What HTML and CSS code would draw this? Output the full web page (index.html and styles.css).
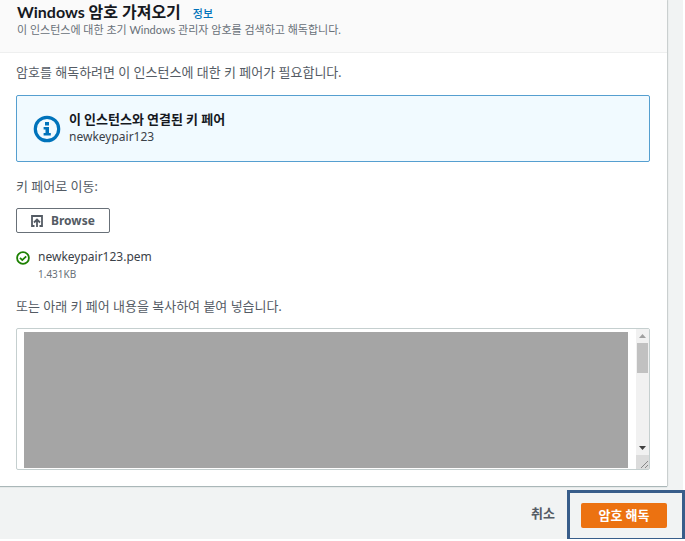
FILE: index.html
```html
<!DOCTYPE html>
<html lang="ko">
<head>
<meta charset="utf-8">
<meta name="viewport" content="width=device-width, initial-scale=1">
<title>Windows 암호 가져오기</title>
<link rel="stylesheet" href="styles.css">
</head>
<body>
<main class="page">
  <form class="form">
    <section class="panel">
      <header class="panel-header">
        <div class="title-row">
          <h1>Windows 암호 가져오기</h1>
          <a class="info-link" href="#info">정보</a>
        </div>
        <p class="description">이 인스턴스에 대한 초기 Windows 관리자 암호를 검색하고 해독합니다.</p>
      </header>
      <div class="panel-body">
        <p class="text">암호를 해독하려면 이 인스턴스에 대한 키 페어가 필요합니다.</p>
        <div class="alert">
          <svg class="alert-icon" viewBox="0 0 28 28" aria-hidden="true">
            <circle cx="14" cy="14" r="11.7" fill="none" stroke="#0073bb" stroke-width="3.2"/>
            <path d="M12 7h4v3.4h-4zM10.6 12H16v6h1.8v2.6h-7.2V18h1.900v-3.4h-1.900z" fill="#0073bb"/>
          </svg>
          <div class="alert-text">
            <strong>이 인스턴스와 연결된 키 페어</strong>
            <span class="latin">newkeypair123</span>
          </div>
        </div>
        <p class="text">키 페어로 이동:</p>
        <button class="browse latin" type="button">
          <svg viewBox="0 0 14 14" aria-hidden="true">
            <path d="M4.500 12H2V2h10v10H9.500M7 13V6M4 8.500l3-3 3 3" fill="none" stroke="#545b64" stroke-width="1.800"/>
          </svg>
          Browse
        </button>
        <div class="file">
          <svg viewBox="0 0 14 14" aria-hidden="true">
            <circle cx="7" cy="7" r="5.900" fill="none" stroke="#1d8102" stroke-width="1.800"/>
            <path d="M4 6.800l2.300 2.300L10.200 5.300" fill="none" stroke="#1d8102" stroke-width="1.800"/>
          </svg>
          <div class="file-text">
            <span class="file-name latin">newkeypair123.pem</span>
            <span class="file-size">1.431KB</span>
          </div>
        </div>
        <label class="text" for="key">또는 아래 키 페어 내용을 복사하여 붙여 넣습니다.</label>
        <div class="key-box">
          <textarea id="key"></textarea>
          <div class="mask"></div>
          <div class="scrollbar" aria-hidden="true">
            <svg class="arrow" viewBox="0 0 13 14"><path d="M3 9h7L6.500 5z" fill="#a0a0a0"/></svg>
            <div class="thumb"></div>
            <svg class="arrow down" viewBox="0 0 13 14"><path d="M3 5h7L6.500 9z" fill="#404040"/></svg>
            <svg class="grip" viewBox="0 0 13 14"><path d="M5 13l7-7M9 13l3-3" stroke="#888" fill="none"/></svg>
          </div>
        </div>
      </div>
    </section>
    <footer class="actions">
      <button class="cancel" type="button">취소</button>
      <div class="highlight"><button class="submit" type="submit">암호 해독</button></div>
    </footer>
  </form>
</main>
</body>
</html>
```

FILE: styles.css
```css
* {
  box-sizing: border-box;
}

body {
  margin: 0;
  background: #fff;
  color: #545b64;
  font: 13px/20px Lato, "Noto Sans CJK KR", sans-serif;
}

h1,
p {
  margin: 0;
}

svg {
  display: block;
  flex: none;
}

button {
  font: inherit;
  font-weight: 700;
  border-radius: 2px;
}

.latin {
  font-family: "Noto Sans", sans-serif;
  font-size: 12px;
}

.page {
  margin-right: 2px;
  background: #f1f3f3;
}

.panel {
  margin-right: 16px;
  background: #fff;
  box-shadow: 0 1px 1px #aab7b8, 1px 0 1px #d0d4d4;
}

.panel-header {
  padding: 2px 17px 14px;
  background: #fafafa;
  border-bottom: 1px solid #eeefef;
}

.title-row {
  display: flex;
  align-items: baseline;
  gap: 12px;
  height: 20px;
}

h1 {
  color: #16191f;
  font-size: 16px;
  line-height: 20px;
  font-weight: 700;
}

.info-link {
  color: #0073bb;
  font-size: 11px;
  font-weight: 500;
  text-decoration: none;
}

.description {
  color: #687078;
  font-size: 11px;
  line-height: 16px;
}

.panel-body {
  padding: 9px 17px 16px 16px;
}

.text {
  display: block;
}

.alert {
  display: flex;
  align-items: center;
  gap: 8px;
  height: 67px;
  margin: 13px 0 14px;
  padding: 0 16px;
  border: 1px solid #559fd0;
  border-radius: 2px;
  background: #f1faff;
  color: #3b4148;
}

.alert-icon {
  width: 28px;
  height: 28px;
}

.alert-text {
  display: flex;
  flex-direction: column;
  padding-bottom: 2px;
  line-height: 18px;
}

.alert-text strong {
  color: #16191f;
}

.browse {
  display: flex;
  align-items: center;
  gap: 7px;
  height: 25px;
  margin: 12px 0 14px;
  padding: 0 14px 0 13px;
  border: 1px solid #687078;
  background: #fff;
  color: #545b64;
}

.browse svg,
.file svg {
  width: 14px;
  height: 14px;
}

.file {
  display: flex;
  gap: 8px;
  margin-bottom: 14px;
}

.file svg {
  margin-top: 4px;
}

.file-text {
  display: flex;
  flex-direction: column;
}

.file-name {
  color: #3b4148;
}

.file-size {
  color: #687078;
  font-family: "Noto Sans", sans-serif;
  font-size: 10px;
  line-height: 15px;
}

.key-box {
  position: relative;
  height: 142px;
  margin-top: 12px;
}

textarea {
  display: block;
  width: 100%;
  height: 100%;
  padding: 4px 22px 4px 7px;
  border: 1px solid #c5cfcf;
  border-radius: 2px;
  resize: none;
  overflow: hidden;
}

.mask {
  position: absolute;
  inset: 4px 22px 2px 8px;
  background: #a5a5a5;
}

.scrollbar {
  position: absolute;
  inset: 1px 1px 1px auto;
  display: flex;
  flex-direction: column;
  width: 13px;
  background: #f1f1f1;
}

.arrow,
.grip {
  width: 13px;
  height: 14px;
}

.thumb {
  height: 30px;
  margin: 0 1px;
  background: #c1c1c1;
}

.down {
  margin-top: auto;
}

.grip {
  background: #dcdcdc;
}

.actions {
  display: flex;
  align-items: center;
  justify-content: flex-end;
  height: 53px;
}

.cancel {
  padding: 0 12px;
  border: 0;
  background: none;
  color: #545b64;
}

.highlight {
  align-self: flex-start;
  height: 51px;
  margin: 4px -2px -2px 0;
  padding: 10px 15px 10px 11px;
  border: 3px solid #385d8a;
}

.submit {
  display: block;
  width: 86px;
  height: 25px;
  padding: 0 0 2px;
  border: 0;
  background: #ec7211;
  color: #fff;
}
```
